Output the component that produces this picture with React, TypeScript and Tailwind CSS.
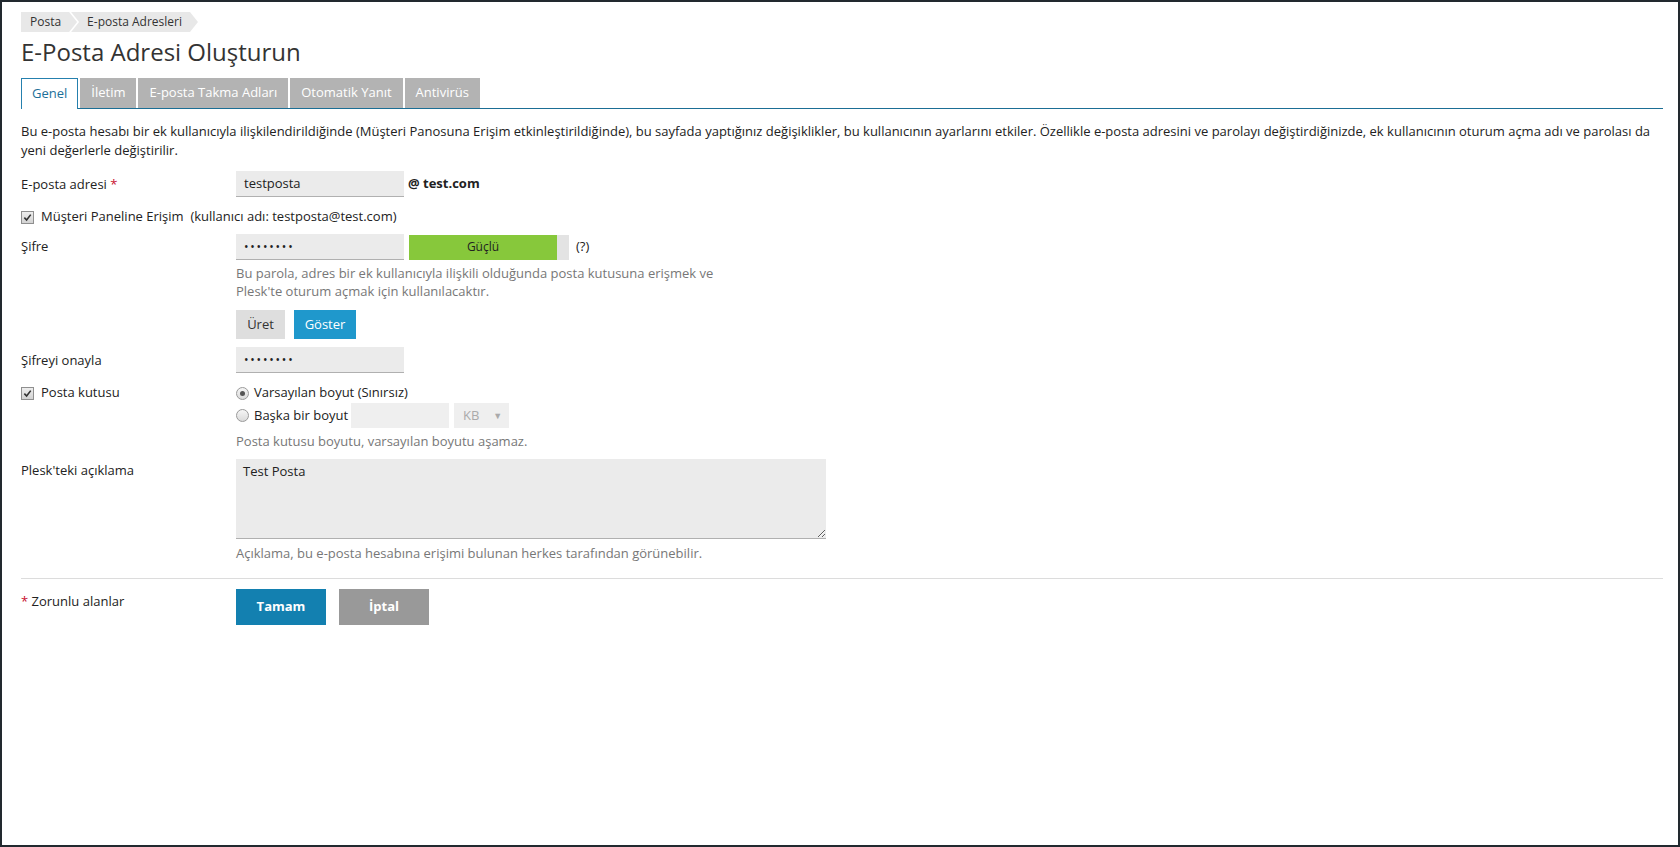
import React from 'react';

const tabs = ['Genel', 'İletim', 'E-posta Takma Adları', 'Otomatik Yanıt', 'Antivirüs'];

function Check() {
  return (
    <span className="inline-flex h-[13px] w-[13px] items-center justify-center border border-[#8f8f8f] bg-gradient-to-b from-[#eeeeee] to-[#d2d2d2]">
      <svg width="9" height="9" viewBox="0 0 10 10">
        <path d="M1.5 5.2 L4 7.8 L8.6 1.8" fill="none" stroke="#333" strokeWidth="1.8" />
      </svg>
    </span>
  );
}

function Radio({ on }: { on?: boolean }) {
  return (
    <span className="inline-flex h-[13px] w-[13px] items-center justify-center rounded-full border border-[#9a9a9a] bg-gradient-to-b from-[#f6f6f6] to-[#dadada]">
      {on && <span className="h-[5px] w-[5px] rounded-full bg-[#555]" />}
    </span>
  );
}

function Field({ value, dots }: { value: string; dots?: boolean }) {
  return (
    <div
      className={`flex h-[26px] w-[168px] items-center border-b border-[#b0b0b0] bg-[#ebebeb] px-2 text-[#222] ${
        dots ? 'text-[12px] tracking-[1.8px]' : 'text-[13px]'
      }`}
    >
      {value}
    </div>
  );
}

export default function App() {
  return (
    <div className="box-border h-[847px] w-full border-2 border-[#22292f] bg-white font-['Open_Sans',sans-serif] text-[13px] text-[#222]">
      <div className="pl-[19px] pr-[15px] pt-[10px]">
        {/* Breadcrumbs */}
        <div className="flex h-[20px] text-[12px] text-[#333]">
          <div className="flex items-center bg-[#e8e8e8] pl-[9px] pr-[16px] [clip-path:polygon(0_0,calc(100%_-_8px)_0,100%_50%,calc(100%_-_8px)_100%,0_100%)]">
            Posta
          </div>
          <div className="-ml-[6px] flex items-center bg-[#e8e8e8] pl-[16px] pr-[16px] [clip-path:polygon(0_0,calc(100%_-_8px)_0,100%_50%,calc(100%_-_8px)_100%,0_100%,8px_50%)]">
            E-posta Adresleri
          </div>
        </div>

        <h1 className="mt-[5px] text-[24px] leading-[30px] text-[#333]">E-Posta Adresi Oluşturun</h1>

        {/* Tabs */}
        <div className="mt-[11px] flex gap-[2px] border-b border-[#1b6e95]">
          {tabs.map((t, i) =>
            i === 0 ? (
              <div
                key={t}
                className="-mb-px flex h-[31px] items-center border border-b-0 border-[#2580ae] bg-white px-[10px] text-[#1c6f99]"
              >
                {t}
              </div>
            ) : (
              <div key={t} className="flex h-[30px] items-center bg-[#b3b3b3] px-[11px] text-white">
                {t}
              </div>
            )
          )}
        </div>

        <p className="mt-[13px] leading-[19px]">
          Bu e-posta hesabı bir ek kullanıcıyla ilişkilendirildiğinde (Müşteri Panosuna Erişim etkinleştirildiğinde), bu
          sayfada yaptığınız değişiklikler, bu kullanıcının ayarlarını etkiler. Özellikle e-posta adresini ve parolayı
          değiştirdiğinizde, ek kullanıcının oturum açma adı ve parolası da yeni değerlerle değiştirilir.
        </p>

        {/* Form */}
        <div className="mt-[11px] grid grid-cols-[215px_1fr]">
          <div className="leading-[26px]">
            E-posta adresi <span className="text-[#c8102e]">*</span>
          </div>
          <div className="flex items-center gap-[4px]">
            <Field value="testposta" />
            <span className="font-bold">@ test.com</span>
          </div>

          <div className="col-span-2 mt-[10px] flex h-[20px] items-center gap-[7px]">
            <Check />
            <span>Müşteri Paneline Erişim&nbsp; (kullanıcı adı: testposta@test.com)</span>
          </div>

          <div className="mt-[7px] leading-[24px]">Şifre</div>
          <div className="mt-[7px]">
            <div className="flex items-center">
              <Field value="••••••••" dots />
              <div className="ml-[5px] flex h-[25px] w-[160px] bg-[#e3e3e3]">
                <div className="flex w-[148px] items-center justify-center bg-[#87c83b] text-[12px]">Güçlü</div>
              </div>
              <span className="ml-[7px]">(?)</span>
            </div>
            <p className="mt-[4px] leading-[18px] text-[#777]">
              Bu parola, adres bir ek kullanıcıyla ilişkili olduğunda posta kutusuna erişmek ve
              <br />
              Plesk'te oturum açmak için kullanılacaktır.
            </p>
            <div className="mt-[10px] flex gap-[9px]">
              <div className="flex h-[29px] w-[49px] items-center justify-center bg-[#dedede] text-[#333]">Üret</div>
              <div className="flex h-[29px] w-[62px] items-center justify-center bg-[#1f98cc] text-white">Göster</div>
            </div>
          </div>

          <div className="mt-[8px] leading-[26px]">Şifreyi onayla</div>
          <div className="mt-[8px]">
            <Field value="••••••••" dots />
          </div>

          <div className="mt-[11px] flex h-[18px] items-center gap-[7px]">
            <Check />
            <span>Posta kutusu</span>
          </div>
          <div className="mt-[11px]">
            <div className="flex h-[18px] items-center gap-[5px]">
              <Radio on />
              <span>Varsayılan boyut (Sınırsız)</span>
            </div>
            <div className="mt-px flex h-[25px] items-center gap-[5px]">
              <Radio />
              <span>Başka bir boyut</span>
              <div className="-ml-[2px] h-[25px] w-[98px] bg-[#efefef]" />
              <div className="flex h-[25px] w-[55px] items-center justify-between bg-[#efefef] pl-[9px] pr-[7px] text-[#aaa]">
                <span>KB</span>
                <span className="text-[9px]">▼</span>
              </div>
            </div>
            <p className="mt-[4px] leading-[18px] text-[#777]">Posta kutusu boyutu, varsayılan boyutu aşamaz.</p>
          </div>

          <div className="mt-[9px] leading-[22px]">Plesk'teki açıklama</div>
          <div className="mt-[9px]">
            <textarea
              readOnly
              defaultValue="Test Posta"
              className="block h-[80px] w-[590px] border-b border-[#b0b0b0] bg-[#ebebeb] px-[7px] py-[3px] leading-[18px] text-[#222] outline-none"
            />
            <p className="mt-[5px] leading-[18px] text-[#777]">
              Açıklama, bu e-posta hesabına erişimi bulunan herkes tarafından görünebilir.
            </p>
          </div>
        </div>

        <div className="mt-[16px] border-t border-[#dcdcdc]" />

        <div className="mt-[10px] grid grid-cols-[215px_1fr]">
          <div className="pt-[3px] leading-[18px]">
            <span className="text-[#c8102e]">*</span> Zorunlu alanlar
          </div>
          <div className="flex gap-[13px]">
            <div className="flex h-[36px] w-[90px] items-center justify-center bg-[#1380b0] font-bold text-white">Tamam</div>
            <div className="flex h-[36px] w-[90px] items-center justify-center bg-[#999] font-bold text-white">İptal</div>
          </div>
        </div>
      </div>
    </div>
  );
}
